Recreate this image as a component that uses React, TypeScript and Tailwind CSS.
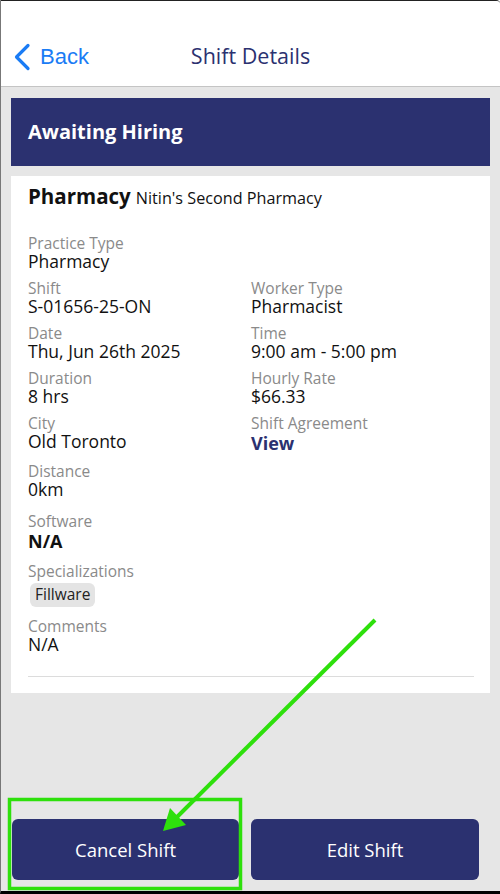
import React from "react";

const Label = ({ children }: { children: React.ReactNode }) => (
  <div className="text-[15.5px] leading-[18px] text-[#8a8a8a]">{children}</div>
);
const Value = ({ children }: { children: React.ReactNode }) => (
  <div className="text-[17.5px] leading-[19px] text-[#111]">{children}</div>
);

export default function App() {
  return (
    <div
      className="relative w-[500px] h-[894px] overflow-hidden bg-[#e6e6e6] border-t border-l border-b-[3px] border-t-[#222] border-l-[#777] border-b-black rounded-tr-[4px] flex flex-col"
      style={{ fontFamily: "'Open Sans', 'Noto Sans', sans-serif" }}
    >
      {/* Header */}
      <div className="h-[86px] bg-white border-b border-[#c4c4c4] relative flex items-end pb-[15px] shrink-0">
        <div className="flex items-center pl-[11px] gap-[6px] text-[#1a7cf5]">
          <svg width="22" height="28" viewBox="0 0 22 28" fill="none">
            <path d="M16 2.5 L4.5 14 L16 25.5" stroke="#1a7cf5" strokeWidth="3.2" strokeLinecap="round" strokeLinejoin="round" />
          </svg>
          <span className="text-[22px] leading-[28px]" style={{ fontFamily: "'Liberation Sans', Arial, sans-serif" }}>Back</span>
        </div>
        <div className="absolute left-0 right-0 bottom-[16px] text-center text-[21.5px] leading-[28px] text-[#2b3170]">
          Shift Details
        </div>
      </div>

      {/* Main */}
      <div className="flex-1 flex flex-col px-[10px] pt-[11px]">
        <div className="h-[68px] bg-[#2b3170] flex items-center px-[17px] text-white text-[20px] font-bold">
          Awaiting Hiring
        </div>

        <div className="mt-[10px] bg-white pl-[17px] pr-[16px] pt-[8px] pb-[16px]">
          <div className="flex items-baseline gap-[5px] leading-[24px]">
            <span className="text-[20.5px] font-bold text-[#111]">Pharmacy</span>
            <span className="text-[16.2px] text-[#111]">Nitin's Second Pharmacy</span>
          </div>

          <div className="mt-[24px] grid grid-cols-[223px_1fr] gap-y-[8px]">
            <div>
              <Label>Practice Type</Label>
              <Value>Pharmacy</Value>
            </div>
            <div />
            <div>
              <Label>Shift</Label>
              <Value>S-01656-25-ON</Value>
            </div>
            <div>
              <Label>Worker Type</Label>
              <Value>Pharmacist</Value>
            </div>
            <div>
              <Label>Date</Label>
              <Value>Thu, Jun 26th 2025</Value>
            </div>
            <div>
              <Label>Time</Label>
              <Value>9:00 am - 5:00 pm</Value>
            </div>
            <div>
              <Label>Duration</Label>
              <Value>8 hrs</Value>
            </div>
            <div>
              <Label>Hourly Rate</Label>
              <Value>$66.33</Value>
            </div>
            <div>
              <Label>City</Label>
              <Value>Old Toronto</Value>
            </div>
            <div>
              <Label>Shift Agreement</Label>
              <div className="text-[18px] leading-[22px] font-bold text-[#2b3170]">View</div>
            </div>
            <div>
              <Label>Distance</Label>
              <Value>0km</Value>
            </div>
          </div>

          <div className="mt-[13px]">
            <Label>Software</Label>
            <div className="text-[18px] leading-[23px] font-bold text-[#111]">N/A</div>
          </div>

          <div className="mt-[9px]">
            <Label>Specializations</Label>
            <div className="mt-[3px] ml-[2px] inline-flex items-center h-[24px] px-[5px] rounded-[6px] bg-[#e4e4e4] text-[15.5px] text-[#222]">
              Fillware
            </div>
          </div>

          <div className="mt-[10px]">
            <Label>Comments</Label>
            <Value>N/A</Value>
          </div>

          <div className="mt-[22px] h-px bg-[#dcdcdc]" />
        </div>

        <div className="flex-1" />

        <div className="flex gap-[12px] pl-px pb-[11px]">
          <button className="w-[227px] h-[61px] rounded-[6px] bg-[#2b3170] text-white text-[18.5px]">
            Cancel Shift
          </button>
          <button className="w-[228px] h-[61px] rounded-[6px] bg-[#2b3170] text-white text-[18.5px]">
            Edit Shift
          </button>
        </div>
      </div>

      {/* Annotation overlay */}
      <svg className="absolute left-[-1px] top-[-1px] pointer-events-none" width="500" height="894" viewBox="0 0 500 894">
        <rect x="9.5" y="799.5" width="231" height="89" fill="none" stroke="#2ee00c" strokeWidth="3.5" />
        <line x1="375" y1="620" x2="176" y2="818" stroke="#2ee00c" strokeWidth="4" />
        <polygon points="163,831 170,808 186,825" fill="#2ee00c" />
      </svg>
    </div>
  );
}
